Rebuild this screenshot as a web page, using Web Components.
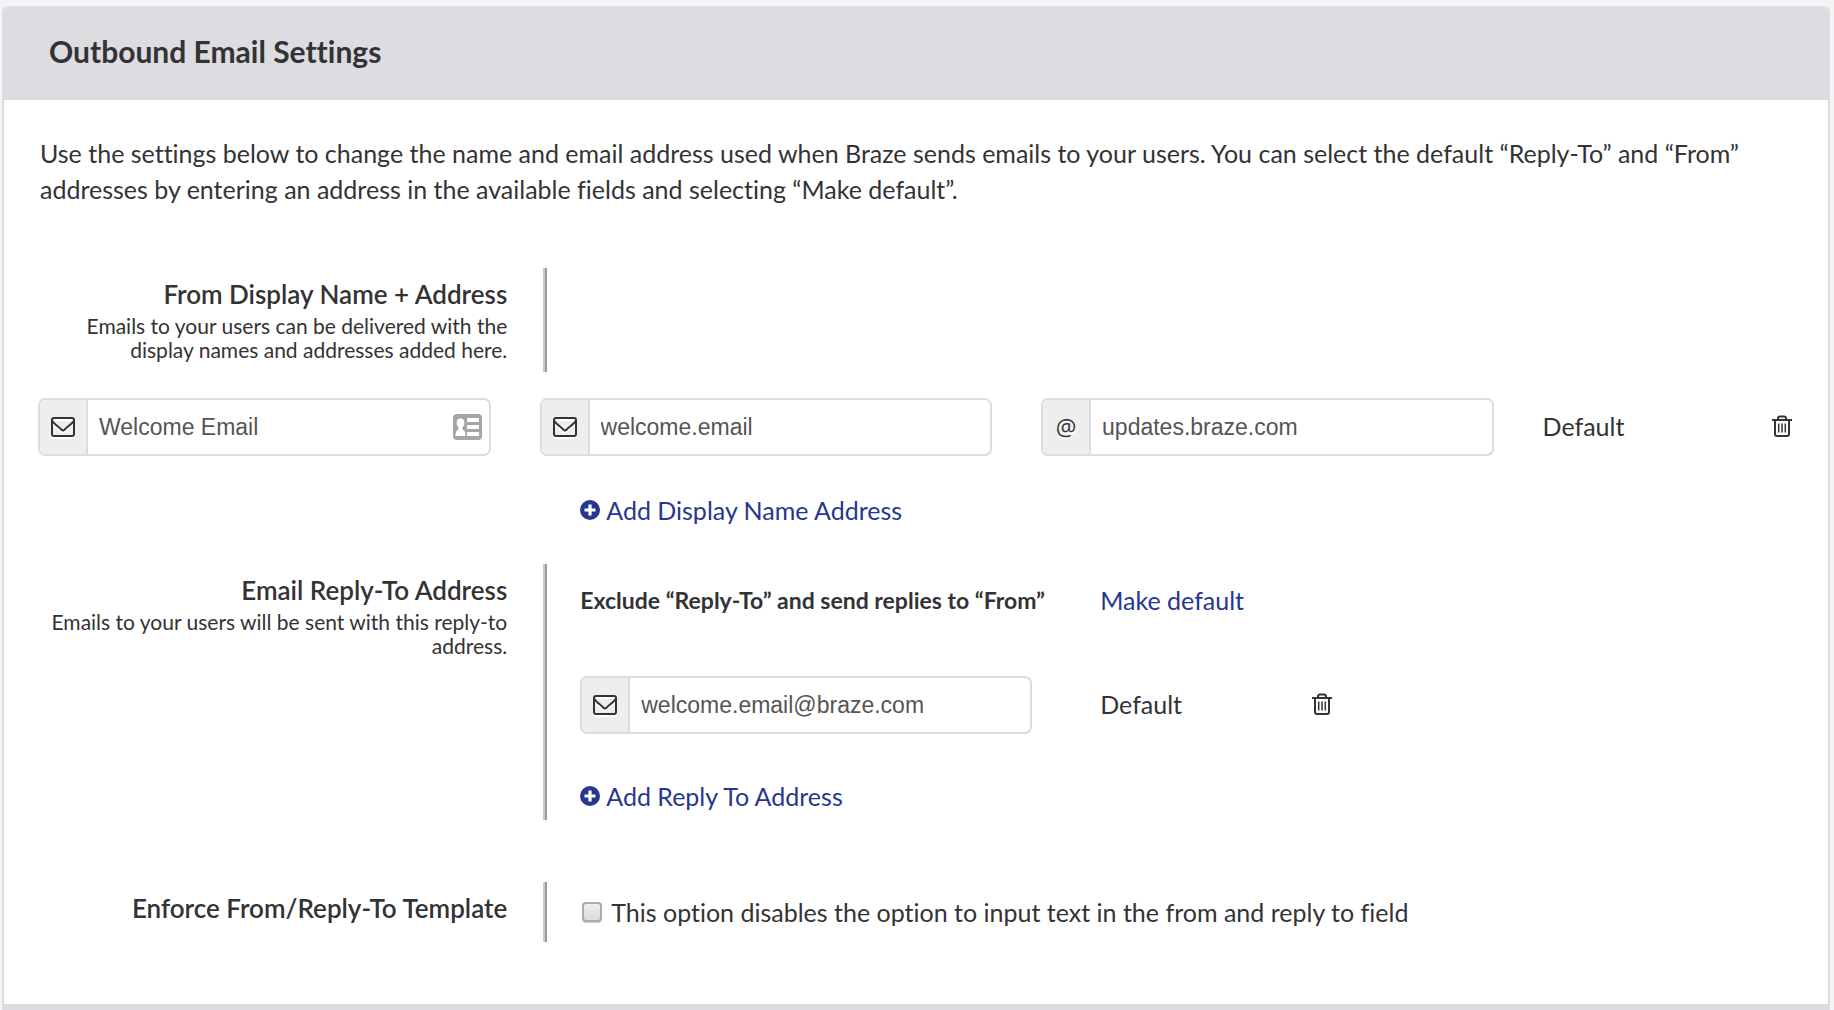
<!DOCTYPE html>
<html lang="en">
<head>
<meta charset="utf-8">
<meta name="viewport" content="width=device-width, initial-scale=1">
<title>Outbound Email Settings</title>
<style>
  html { background: #f3f4f6; }
  body {
    margin: 0;
    padding: 6px 4px 0 2px;
    font-family: Lato, "Open Sans", sans-serif;
    font-size: 25px;
    line-height: 36px;
    font-variant-ligatures: none;
    color: #333335;
    --line: #dcdce1;
    --link: #27368f;
  }
  p { margin: 0; }
</style>
</head>
<body>
<settings-panel heading="Outbound Email Settings">
  <p slot="intro">Use the settings below to change the name and email address used when Braze sends emails to your users. You can select the default “Reply-To” and “From” addresses by entering an address in the available fields and selecting “Make default”.</p>
  <from-addresses></from-addresses>
  <reply-to-address></reply-to-address>
  <enforce-template></enforce-template>
</settings-panel>

<script>
const define = (name, html, setup) => {
  const template = document.createElement('template');
  template.innerHTML = html;
  customElements.define(name, class extends HTMLElement {
    constructor() {
      super();
      this.attachShadow({ mode: 'open' }).append(template.content.cloneNode(true));
    }
    connectedCallback() {
      if (setup) setup(this, this.shadowRoot);
    }
  });
};

define('settings-panel', `
  <style>
    :host { display: block; border: 2px solid var(--line); border-top: 0; border-bottom-width: 8px; border-radius: 6px 6px 0 0; background: #fff; overflow: hidden; }
    header { padding: 27px 45px 31px; background: #dddce1; }
    h1 { margin: 0; font-size: 30px; line-height: 36px; font-weight: 700; }
    .body { padding: 35px 34px 62px; }
    .intro { padding: 0 2px; }
  </style>
  <header><h1></h1></header>
  <div class="body">
    <div class="intro"><slot name="intro"></slot></div>
    <slot></slot>
  </div>
`, (el, root) => { root.querySelector('h1').textContent = el.getAttribute('heading'); });

define('setting-row', `
  <style>
    :host { display: flex; }
    .label { box-sizing: border-box; flex: 0 0 29%; border-right: 2px solid #999; padding: 8px 38px 0 0; text-align: right; box-shadow: inset -2px 0 #cacaca; }
    h2 { margin: 0 0 2px; font-size: 26px; line-height: 36px; font-weight: 600; white-space: nowrap; }
    .desc { font-size: 21px; line-height: 24px; }
    .content { flex: 1; min-width: 0; padding-left: 33px; }
  </style>
  <div class="label">
    <h2></h2>
    <div class="desc"><slot name="desc"></slot></div>
  </div>
  <div class="content"><slot></slot></div>
`, (el, root) => { root.querySelector('h2').textContent = el.getAttribute('heading'); });

define('mail-icon', `
  <style>:host { display: block; } svg { display: block; filter: drop-shadow(0 2px 0 #fff); }</style>
  <svg width="24" height="20" viewBox="0 0 24 20" fill="none" stroke="#333335" stroke-width="2" aria-hidden="true">
    <rect x="1" y="1" width="22" height="18" rx="2"/>
    <path d="M1 3.500C3 7 8 10 10.500 12.700Q12 14 13.500 12.700C16 10 21 7 23 3.500"/>
  </svg>
`);

define('address-field', `
  <style>
    :host { display: block; }
    .group { display: flex; box-sizing: border-box; height: 58px; border: 2px solid var(--line); border-radius: 7px; background: #fff; overflow: hidden; }
    .addon { display: flex; flex: 0 0 46px; align-items: center; justify-content: center; border-right: 2px solid var(--line); background: #eee; font: 23px "Open Sans", sans-serif; text-shadow: 0 2px 0 #fff; }
    input { flex: 1; min-width: 0; border: 0; padding: 0 11px; background: none; color: #555; font: 23px "Liberation Sans", Arial, sans-serif; outline: 0; }
    .card { align-self: center; margin-right: 7px; }
    .card[hidden] { display: none; }
    .card svg { display: block; }
  </style>
  <div class="group">
    <span class="addon"></span>
    <input type="text">
    <span class="card" hidden>
      <svg width="29" height="26" viewBox="0 0 29 26" aria-hidden="true">
        <rect width="29" height="26" rx="4" fill="#a6a6a6"/>
        <g fill="#fff">
          <ellipse cx="7.500" cy="9" rx="3.800" ry="4.400"/>
          <path d="M5.500 12h4v3.500l2 1.500q1 1 1 5h-10q0-4 1-5l2-1.500z"/>
          <rect x="14" y="4" width="12" height="4"/>
          <rect x="14" y="11" width="12" height="4"/>
          <rect x="14" y="18" width="12" height="4"/>
        </g>
      </svg>
    </span>
  </div>
`, (el, root) => {
  const input = root.querySelector('input');
  input.value = el.getAttribute('value');
  input.setAttribute('aria-label', el.getAttribute('label'));
  const addon = root.querySelector('.addon');
  if (el.getAttribute('addon') === 'at') addon.textContent = '@';
  else addon.replaceChildren(document.createElement('mail-icon'));
  root.querySelector('.card').hidden = !el.hasAttribute('contact-card');
});

define('trash-button', `
  <style>
    :host { display: block; }
    button { display: block; border: 0; padding: 0; background: none; color: #333335; cursor: pointer; }
    svg { display: block; }
  </style>
  <button type="button" aria-label="Delete">
    <svg width="20" height="22" viewBox="0 0 20 22" fill="none" stroke="currentColor" stroke-width="2" aria-hidden="true">
      <path d="M0 5h20M6 5V3.500Q6 1.500 8 1.500h4Q14 1.500 14 3.500V5M3 5v14q0 2 2 2h10q2 0 2-2V5"/>
      <path d="M6.700 8.500v9M10 8.500v9M13.300 8.500v9" stroke-width="1.500"/>
    </svg>
  </button>
`);

define('add-link', `
  <style>
    :host { display: block; }
    a { display: inline-flex; align-items: center; gap: 6px; color: var(--link); text-decoration: none; }
    svg { display: block; }
  </style>
  <a href="#">
    <svg width="20" height="20" viewBox="0 0 20 20" aria-hidden="true">
      <circle cx="10" cy="10" r="10" fill="currentColor"/>
      <path d="M10 4.500v11M4.500 10h11" stroke="#fff" stroke-width="3.200"/>
    </svg>
    <span><slot></slot></span>
  </a>
`);

define('from-addresses', `
  <style>
    :host { display: block; margin-top: 61px; }
    setting-row { min-height: 104px; }
    .fields { display: grid; grid-template-columns: repeat(3, minmax(0, 9fr)) minmax(0, 5fr); column-gap: 49px; align-items: center; margin-top: 26px; }
    .status { display: flex; align-items: center; justify-content: space-between; padding: 0 2px 2px 0; }
    .add { margin-top: 36px; padding-left: calc(29% + 33px); }
  </style>
  <setting-row heading="From Display Name + Address">
    <span slot="desc">Emails to your users can be delivered with the display names and addresses added here.</span>
  </setting-row>
  <div class="fields">
    <address-field label="Display name" value="Welcome Email" contact-card></address-field>
    <address-field label="Address local part" value="welcome.email"></address-field>
    <address-field label="Address domain" value="updates.braze.com" addon="at"></address-field>
    <div class="status"><span>Default</span><trash-button></trash-button></div>
  </div>
  <div class="add"><add-link>Add Display Name Address</add-link></div>
`);

define('reply-to-address', `
  <style>
    :host { display: block; margin-top: 36px; }
    .grid { display: grid; grid-template-columns: minmax(0, 520px) minmax(0, 212px) auto; justify-content: start; align-items: center; padding-top: 18px; }
    .exclude { font-size: 23px; font-weight: 700; }
    a { color: var(--link); text-decoration: none; }
    address-field { margin-right: 68px; }
    .grid + .grid { padding-top: 58px; }
    .status { padding-bottom: 2px; }
    add-link { padding: 44px 0 6px; }
  </style>
  <setting-row heading="Email Reply-To Address">
    <span slot="desc">Emails to your users will be sent with this reply-to address.</span>
    <div class="grid">
      <span class="exclude">Exclude “Reply-To” and send replies to “From”</span>
      <a href="#">Make default</a>
    </div>
    <div class="grid">
      <address-field label="Reply-to address" value="welcome.email@braze.com"></address-field>
      <span class="status">Default</span>
      <trash-button class="status"></trash-button>
    </div>
    <add-link>Add Reply To Address</add-link>
  </setting-row>
`);

define('enforce-template', `
  <style>
    :host { display: block; margin-top: 62px; }
    label { display: flex; align-items: center; gap: 9px; padding: 12px 0; }
    input { appearance: none; box-sizing: border-box; width: 20px; height: 20px; flex: none; margin: 0 0 0 2px; border: 2px solid #aaa; border-radius: 4px; background: linear-gradient(#eee, #dcdcdc); box-shadow: 0 1px 1px #ccc; }
    input:checked { background: var(--link); }
  </style>
  <setting-row heading="Enforce From/Reply-To Template">
    <label><input type="checkbox"><span>This option disables the option to input text in the from and reply to field</span></label>
  </setting-row>
`);
</script>
</body>
</html>
